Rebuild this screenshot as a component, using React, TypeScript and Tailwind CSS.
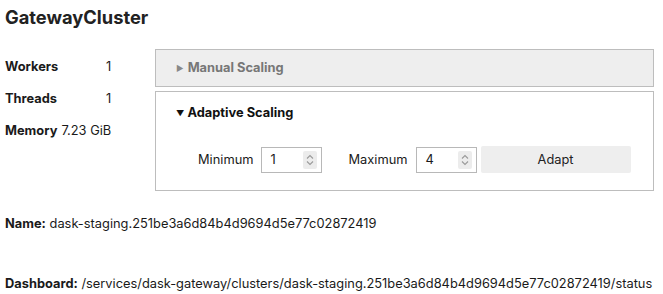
import { useState } from 'react'

function Spinner() {
  return (
    <div className="flex items-center justify-center w-[14px] h-[18px] bg-[#ececec] rounded-[2px]">
      <svg width="8" height="12" viewBox="0 0 8 12" fill="none" stroke="#9a9a9a" strokeWidth="1.1">
        <path d="M1 4.5 L4 1.5 L7 4.5" />
        <path d="M1 7.5 L4 10.5 L7 7.5" />
      </svg>
    </div>
  )
}

function NumberBox({ value }: { value: string }) {
  return (
    <div className="flex items-center justify-between w-[61px] h-[26px] border border-[#b8b8b8] bg-white pl-[9px] pr-[4px]">
      <span>{value}</span>
      <Spinner />
    </div>
  )
}

export default function App() {
  const [manualOpen, setManualOpen] = useState(false)

  return (
    <div className="w-[663px] h-[294px] bg-white text-[#1a1a1a] text-[12.85px] font-['Inter','Liberation_Sans',Arial,sans-serif] overflow-hidden">
      <h1 className="pl-[5px] pt-[4px] h-[49px] text-[18.3px] font-bold text-[#222]">GatewayCluster</h1>

      <div className="flex">
        <div className="w-[155px] shrink-0 pl-[5px] flex flex-col pt-[8px]">
          <div className="h-[32px] flex items-start">
            <span className="w-[101px] font-bold">Workers</span>
            <span>1</span>
          </div>
          <div className="h-[32px] flex items-start">
            <span className="w-[101px] font-bold">Threads</span>
            <span>1</span>
          </div>
          <div className="h-[32px] flex items-start">
            <span className="font-bold">Memory</span>
            <span className="ml-[4px]">7.23 GiB</span>
          </div>
        </div>

        <div className="w-[499px] flex flex-col gap-[4px]">
          <button
            onClick={() => setManualOpen(!manualOpen)}
            className="h-[38px] w-full flex items-center gap-[4px] pl-[20px] bg-[#eeeeee] border border-[#bdbdbd] text-[#777] font-bold text-left"
          >
            <span className="text-[8px] text-[#888]">▶</span>
            Manual Scaling
          </button>

          <div className="h-[100px] border border-[#bdbdbd] flex flex-col">
            <div className="h-[40px] flex items-center gap-[3px] pl-[20px] pt-[2px] font-bold text-[#111]">
              <span className="text-[8px]">▼</span>
              Adaptive Scaling
            </div>
            <div className="flex items-center pt-[14px] pl-[42px]">
              <span className="mr-[7px]">Minimum</span>
              <NumberBox value="1" />
              <span className="ml-[27px] mr-[8px]">Maximum</span>
              <NumberBox value="4" />
              <button className="ml-[4px] w-[150px] h-[27px] bg-[#eeeeee] rounded-[2px] text-[#222]">Adapt</button>
            </div>
          </div>
        </div>
      </div>

      <div className="pl-[5px] pt-[23px]">
        <p className="h-[60px]">
          <b>Name:</b> dask-staging.251be3a6d84b4d9694d5e77c02872419
        </p>
        <p>
          <b>Dashboard:</b> /services/dask-gateway/clusters/dask-staging.251be3a6d84b4d9694d5e77c02872419/status
        </p>
      </div>
    </div>
  )
}
